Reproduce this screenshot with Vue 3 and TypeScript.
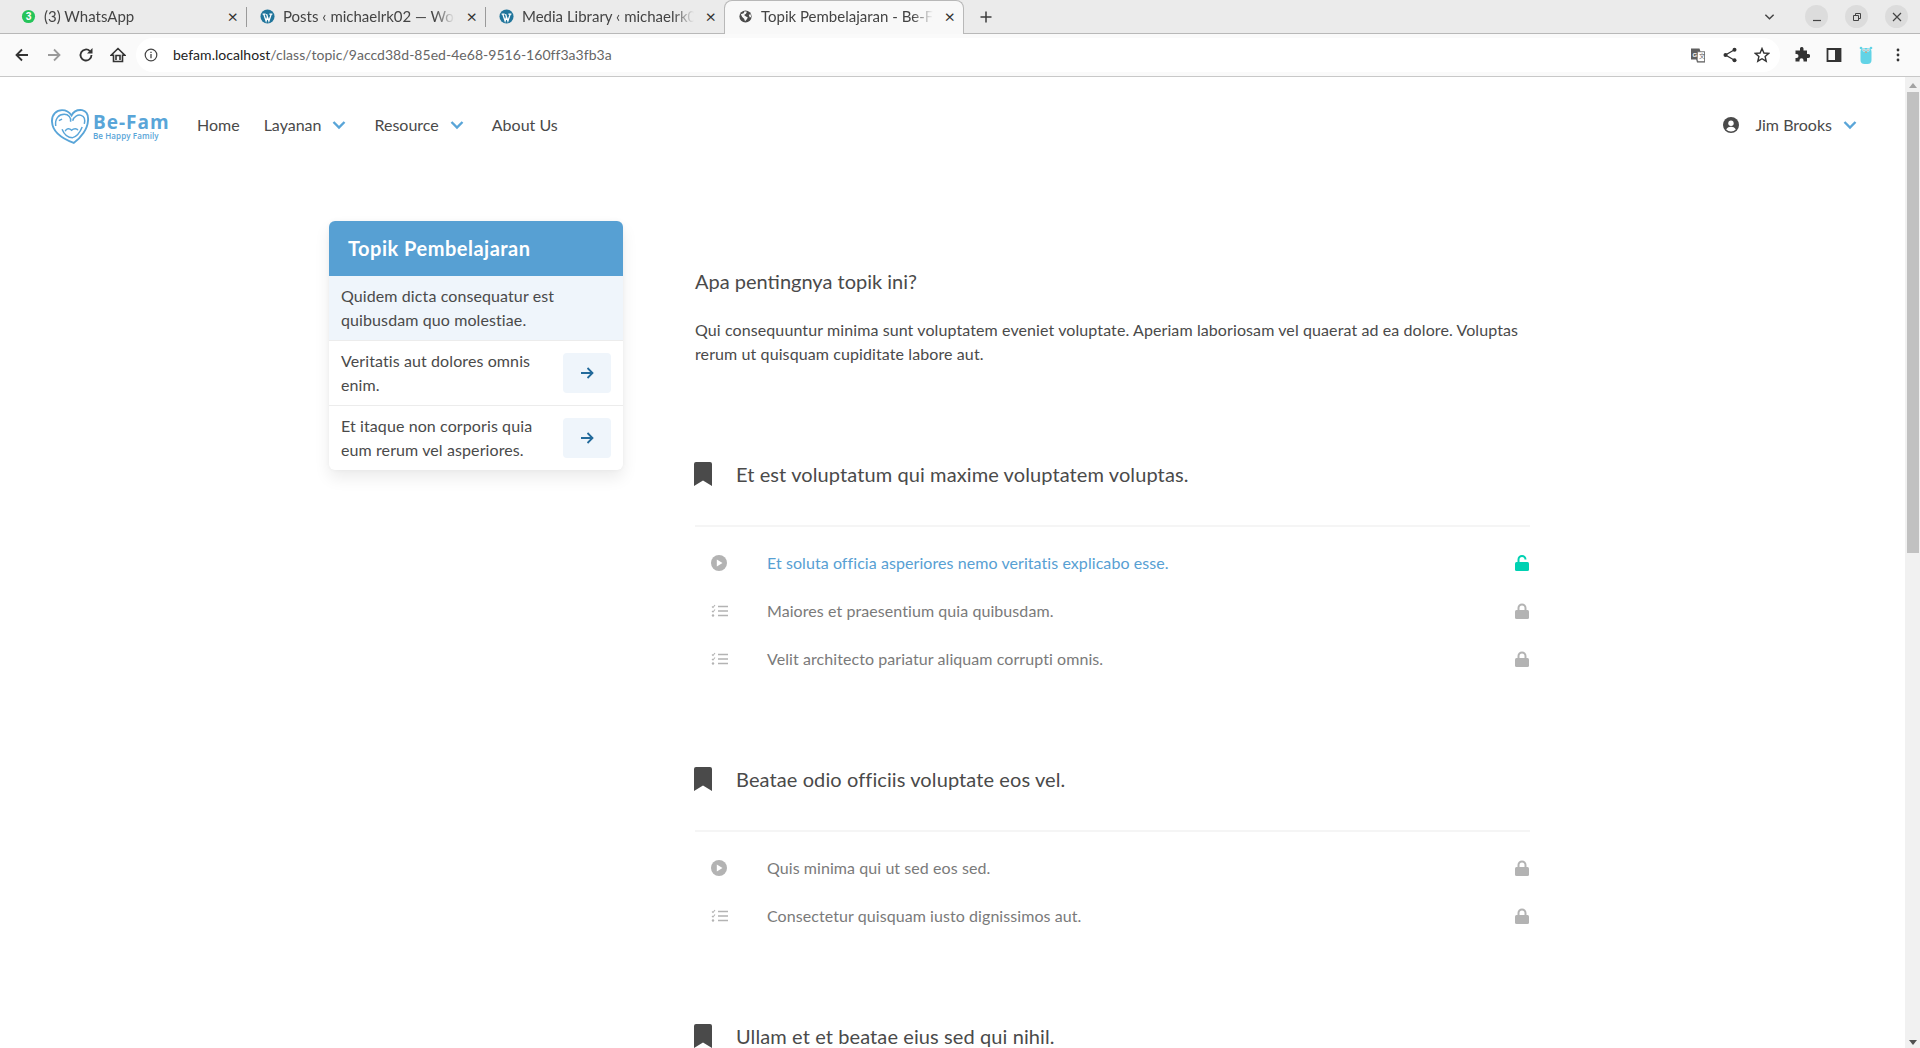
<script setup lang="ts">
interface Item { kind: 'play' | 'list'; text: string; open?: boolean }
interface Section { title: string; items: Item[] }
const tabs = [
  { icon: 'wa', title: '(3) WhatsApp' },
  { icon: 'wp', title: 'Posts ‹ michaelrk02 — WordPress' },
  { icon: 'wp', title: 'Media Library ‹ michaelrk02' },
]
const lessons = [
  { text: 'Quidem dicta consequatur est quibusdam quo molestiae.', active: true },
  { text: 'Veritatis aut dolores omnis enim.', active: false },
  { text: 'Et itaque non corporis quia eum rerum vel asperiores.', active: false },
]
const sections: Section[] = [
  {
    title: 'Et est voluptatum qui maxime voluptatem voluptas.',
    items: [
      { kind: 'play', text: 'Et soluta officia asperiores nemo veritatis explicabo esse.', open: true },
      { kind: 'list', text: 'Maiores et praesentium quia quibusdam.' },
      { kind: 'list', text: 'Velit architecto pariatur aliquam corrupti omnis.' },
    ],
  },
  {
    title: 'Beatae odio officiis voluptate eos vel.',
    items: [
      { kind: 'play', text: 'Quis minima qui ut sed eos sed.' },
      { kind: 'list', text: 'Consectetur quisquam iusto dignissimos aut.' },
    ],
  },
  { title: 'Ullam et et beatae eius sed qui nihil.', items: [] },
]
</script>

<template>
  <div class="window">
    <div class="tabstrip">
      <div v-for="t in tabs" :key="t.title" class="tab">
        <svg v-if="t.icon === 'wa'" class="fav" viewBox="0 0 16 16"><circle cx="8" cy="8" r="7" fill="#25c45a" /><text x="8" y="12" text-anchor="middle" font-size="11" font-weight="700" fill="#fff" font-family="Liberation Sans">3</text></svg>
        <svg v-else class="fav" viewBox="0 0 16 16"><circle cx="8" cy="8" r="7.5" fill="#21759b" /><path d="M2.800 5.500h3.200M10 5.500h3.200M4 5.500 6.500 12.800 8 8.500 9.500 12.800 12 5.500M8 8.500 7 5.500" fill="none" stroke="#fff" stroke-width="1.400" /></svg>
        <span class="tab-title">{{ t.title }}</span>
        <span class="tab-x">×</span>
      </div>
      <div class="tab active">
        <svg class="fav" viewBox="0 0 16 16"><circle cx="8" cy="8" r="6.5" fill="#4a4a4a" /><path d="M3 5.500 6 4.500 7 2.500 9.500 3 8.500 5 6.500 6.500 8.500 8 10.500 9 9 11.500 7.500 13 6.500 10.500 4.500 8.500ZM11.500 6l2-.5.5 3-1.500.5Z" fill="#f8f8f8" /></svg>
        <span class="tab-title">Topik Pembelajaran - Be-Fam</span>
        <span class="tab-x">×</span>
      </div>
      <svg class="plus" viewBox="0 0 12 12"><path d="M6 .5v11M.5 6h11" stroke="#3c3c3c" stroke-width="1.500" /></svg>
      <div class="strip-right">
        <svg class="chev" viewBox="0 0 12 8"><path d="M1.500 1.500 6 6l4.500-4.500" fill="none" stroke="#444" stroke-width="1.600" /></svg>
        <span class="win-btn"><svg viewBox="0 0 12 12"><path d="M2 9.500h8" stroke="#444" stroke-width="1.200" /></svg></span>
        <span class="win-btn"><svg viewBox="0 0 12 12"><path d="M2.500 4.500h5v5h-5zM4.500 4.500V2.500h5v5h-2" fill="none" stroke="#444" stroke-width="1" /></svg></span>
        <span class="win-btn"><svg viewBox="0 0 12 12"><path d="M2 2l8 8M10 2l-8 8" stroke="#444" stroke-width="1.200" /></svg></span>
      </div>
    </div>

    <div class="toolbar">
      <svg class="tool" viewBox="0 0 16 16"><path d="M14 8H3M8 2.500 2.500 8 8 13.500" fill="none" stroke="#333" stroke-width="1.800" /></svg>
      <svg class="tool" viewBox="0 0 16 16"><path d="M2 8h11M8 2.500 13.500 8 8 13.500" fill="none" stroke="#9a9a9a" stroke-width="1.800" /></svg>
      <svg class="tool" viewBox="0 0 16 16"><path d="M13.500 8a5.500 5.500 0 1 1-1.600-3.900" fill="none" stroke="#333" stroke-width="1.800" /><path d="M14.500 1v5.500H9z" fill="#333" /></svg>
      <svg class="tool" viewBox="0 0 16 16"><path d="M8 1.500 1.200 8.200H3.500V14.500h9V8.200h2.300zM6 13V8.500h4V13" fill="none" stroke="#333" stroke-width="1.600" /></svg>
      <div class="omnibox">
        <svg class="info" viewBox="0 0 14 14"><circle cx="7" cy="7" r="5.800" fill="none" stroke="#444" stroke-width="1.200" /><path d="M7 6v4.200M7 3.800v1.200" stroke="#444" stroke-width="1.300" /></svg>
        <span class="url"><b>befam.localhost</b>/class/topic/9accd38d-85ed-4e68-9516-160ff3a3fb3a</span>
        <span class="omni-right">
          <svg class="tool-s" viewBox="0 0 16 16"><path d="M1 1.500h8.500l1 3h4.500v11H7l-.8-3H1z" fill="#5f5f5f" /><path d="M7.500 4.800h7v9.800H7.900l-.6-2.400z" fill="#fff" stroke="#5f5f5f" stroke-width=".6" /><text x="2.500" y="9.800" font-size="6" fill="#fff" font-family="Liberation Sans" font-weight="700">G</text><text x="9" y="11" font-size="6" fill="#5f5f5f" font-family="Noto Sans CJK SC">文</text></svg>
          <svg class="tool-s" viewBox="0 0 16 16"><path d="M12.500 2.800 3.500 8l9 5.200" fill="none" stroke="#333" stroke-width="1.300" /><circle cx="12.500" cy="2.800" r="2" fill="#333" /><circle cx="3.500" cy="8" r="2" fill="#333" /><circle cx="12.500" cy="13.200" r="2" fill="#333" /></svg>
          <svg class="tool-s" viewBox="0 0 16 16"><path d="M8 1.500 9.900 6l4.800.4-3.600 3.100 1.100 4.700L8 11.700l-4.200 2.500 1.100-4.700-3.600-3.100L6.100 6z" fill="none" stroke="#333" stroke-width="1.400" /></svg>
        </span>
      </div>
      <div class="ext">
        <svg class="tool-s" viewBox="0 0 16 16"><path d="M6 1.500a1.800 1.800 0 0 1 3.500 0V3.500H13V7h1.200a2 2 0 0 1 0 4H13v3.500H9.500v-1.200a2 2 0 0 0-4 0v1.200H1.500V11h1a2 2 0 0 0 0-4h-1V3.500H6z" fill="#333" /></svg>
        <svg class="tool-s" viewBox="0 0 16 16"><path d="M1.500 2h13v12h-13z" fill="none" stroke="#333" stroke-width="1.800" /><path d="M9 2h6v12H9z" fill="#333" /></svg>
        <svg class="tool-s gopher" viewBox="0 0 16 20"><rect x="2.500" y="3" width="11" height="16" rx="4" fill="#62d3e6" /><circle cx="3" cy="3" r="1.300" fill="#62d3e6" /><circle cx="13" cy="3" r="1.300" fill="#62d3e6" /><circle cx="6" cy="5" r="1.500" fill="#fff" /><circle cx="10" cy="5" r="1.500" fill="#fff" /><circle cx="6" cy="5" r=".6" fill="#222" /><circle cx="10" cy="5" r=".6" fill="#222" /><rect x="7" y="6.500" width="2" height="1.500" fill="#c9a98c" /></svg>
        <svg class="tool-s" viewBox="0 0 16 16"><circle cx="8" cy="3" r="1.400" fill="#333" /><circle cx="8" cy="8" r="1.400" fill="#333" /><circle cx="8" cy="13" r="1.400" fill="#333" /></svg>
      </div>
    </div>

    <div class="viewport">
      <div class="page">
        <nav class="nav">
          <div class="logo">
            <svg class="logo-mark" viewBox="0 0 37 34"><path d="M22 33C14 30 2 24 1.500 13 1 6 6 2 11 2c4 0 7 2 9 5 2-4 6-5.500 10-5 4 1 6 5 5.500 10C35 20 29 28 22 33Z" fill="none" stroke="#59a5d8" stroke-width="1.800" /><path d="M5 17C4 10 8 6 13 6c4 0 7 3 6 7M8 12l3-1.500M21 12c1-4 5-6 8-5 3 1 4 4 3 8M11 20c2 5 6 8 10 8 4-1 7-5 9-10M14 22c1-3 4-3 6-1 2-2 5-2 6 0" fill="none" stroke="#59a5d8" stroke-width="1.400" /></svg>
            <div class="logo-text"><span class="logo-name">Be-Fam</span><span class="logo-tag">Be Happy Family</span></div>
          </div>
          <a class="nav-link"><span class="nav-label">Home</span></a>
          <a class="nav-link"><span class="nav-label">Layanan</span><svg class="caret" viewBox="0 0 14 10"><path d="M1.500 2 7 7.500 12.500 2" fill="none" stroke="#59a5d8" stroke-width="2.400" /></svg></a>
          <a class="nav-link"><span class="nav-label">Resource</span><svg class="caret" viewBox="0 0 14 10"><path d="M1.500 2 7 7.500 12.500 2" fill="none" stroke="#59a5d8" stroke-width="2.400" /></svg></a>
          <a class="nav-link"><span class="nav-label">About Us</span></a>
          <div class="user">
            <svg class="avatar" viewBox="0 0 16 16"><circle cx="8" cy="8" r="8" fill="#4a4a4a" /><circle cx="8" cy="6.200" r="2.700" fill="#fff" /><path d="M3.200 12.500c1-2 3-2.700 4.800-2.700s3.800.7 4.800 2.700A6.500 6.500 0 0 1 8 14.500a6.500 6.500 0 0 1-4.800-2z" fill="#fff" /></svg>
            <span class="nav-label">Jim Brooks</span>
            <svg class="caret" viewBox="0 0 14 10"><path d="M1.500 2 7 7.500 12.500 2" fill="none" stroke="#59a5d8" stroke-width="2.400" /></svg>
          </div>
        </nav>

        <div class="content">
          <aside class="card">
            <h2 class="card-head">Topik Pembelajaran</h2>
            <div v-for="l in lessons" :key="l.text" class="lesson" :class="{ current: l.active }">
              <span class="lesson-text">{{ l.text }}</span>
              <span v-if="!l.active" class="go"><svg viewBox="0 0 16 16"><path d="M2 8h11.500M8.500 3l5 5-5 5" fill="none" stroke="#236a9b" stroke-width="1.800" /></svg></span>
            </div>
          </aside>

          <main class="main">
            <h3 class="intro-title">Apa pentingnya topik ini?</h3>
            <p class="intro">Qui consequuntur minima sunt voluptatem eveniet voluptate. Aperiam laboriosam vel quaerat ad ea dolore. Voluptas rerum ut quisquam cupiditate labore aut.</p>

            <section v-for="s in sections" :key="s.title" class="section">
              <div class="sec-head">
                <svg class="mark" viewBox="0 0 18 24"><path d="M0 2a2 2 0 0 1 2-2h14a2 2 0 0 1 2 2v22l-9-5.500L0 24z" fill="#4a4a4a" /></svg>
                <span>{{ s.title }}</span>
              </div>
              <template v-if="s.items.length">
                <hr class="rule" />
                <div v-for="i in s.items" :key="i.text" class="row" :class="{ open: i.open }">
                  <span class="row-icon">
                    <svg v-if="i.kind === 'play'" class="ic-play" viewBox="0 0 16 16"><circle cx="8" cy="8" r="8" fill="#b3b3b3" /><path d="M5.800 4.500v7l5.700-3.500z" fill="#fff" /></svg>
                    <svg v-else class="ic-list" viewBox="0 0 18 14"><path d="M7 2.500h10M7 7h10M7 11.500h10" stroke="#b3b3b3" stroke-width="1.500" /><path d="M1 2.500l1 1 2-2.500M1 7l1 1 2-2.500" fill="none" stroke="#b3b3b3" stroke-width="1.100" /><circle cx="2" cy="11.500" r="1.200" fill="#b3b3b3" /></svg>
                  </span>
                  <span class="row-text">{{ i.text }}</span>
                  <svg class="lock" viewBox="0 0 14 16">
                    <path v-if="i.open" d="M3.500 7V4.500a3.500 3.500 0 0 1 7 0" fill="none" stroke="currentColor" stroke-width="2" />
                    <path v-else d="M3.500 8V5a3.500 3.500 0 0 1 7 0v3" fill="none" stroke="currentColor" stroke-width="2" />
                    <rect y="7" width="14" height="9" rx="1.500" fill="currentColor" />
                  </svg>
                </div>
              </template>
            </section>
          </main>
        </div>
      </div>
      <div class="scrollbar">
        <svg class="arrow" viewBox="0 0 10 6"><path d="M5 0l5 6H0z" fill="#a3a3a3" /></svg>
        <div class="thumb"></div>
        <span class="spacer"></span>
        <svg class="arrow" viewBox="0 0 10 6"><path d="M5 6 0 0h10z" fill="#505050" /></svg>
      </div>
    </div>
  </div>
</template>

<style>
html, body { margin: 0; overflow: hidden; background: #fff; }
</style>

<style scoped>
.window { width: 1920px; height: 1048px; display: flex; flex-direction: column; overflow: hidden; font-family: Lato, "Noto Sans", sans-serif; color: #4a4a4a; }
.tabstrip { height: 34px; flex: none; background: #ebebeb; border-bottom: 1px solid #b8b8b8; box-sizing: border-box; display: flex; align-items: flex-start; padding-left: 8px; font-size: 15px; }
.tab { width: 239px; box-sizing: border-box; display: flex; align-items: center; padding: 0 8px 2px 13px; border-right: 1px solid #9a9a9a; margin-top: 7px; height: 20px; color: #444; }
.tab.active { background: #f8f8f8; width: 240px; border: 1px solid #b8b8b8; border-bottom: none; border-radius: 8px 8px 0 0; margin: 0 0 -1px -1px; height: 34px; padding-bottom: 3px; }
.fav { width: 15px; height: 15px; flex: none; margin-right: 8px; }
.tab-title { flex: 1; min-width: 0; white-space: nowrap; overflow: hidden; -webkit-mask-image: linear-gradient(to right, #000 88%, transparent); mask-image: linear-gradient(to right, #000 88%, transparent); }
.tab-x { font-size: 18px; line-height: 18px; margin-left: 12px; color: #333; }
.plus { width: 12px; height: 12px; margin: 11px 0 0 16px; flex: none; }
.strip-right { margin-left: auto; display: flex; align-items: center; height: 33px; padding-right: 12px; gap: 17px; }
.chev { width: 11px; height: 8px; margin-right: 13px; }
.win-btn { width: 23px; height: 23px; border-radius: 50%; background: #dcdcdc; display: flex; align-items: center; justify-content: center; }
.win-btn svg { width: 12px; height: 12px; }

.toolbar { height: 43px; background: #fafafa; border-bottom: 1px solid #c8c8c8; box-sizing: border-box; display: flex; align-items: center; padding-left: 14px; flex: none; }
.tool { width: 16px; height: 16px; margin-right: 16px; flex: none; }
.omnibox { width: 1644px; height: 34px; background: #fff; border-radius: 17px; display: flex; align-items: center; padding: 0 0 0 8px; box-sizing: border-box; font-size: 14px; color: #666; margin-left: -6px; }
.info { width: 14px; height: 14px; margin-right: 15px; }
.url { letter-spacing: .03px; padding-bottom: 1px; }
.url b { font-weight: 400; color: #222; }
.omni-right { margin-left: auto; display: flex; gap: 16px; padding-right: 10px; }
.tool-s { width: 16px; height: 16px; flex: none; }
.ext { display: flex; align-items: center; gap: 16px; margin-left: 14px; }
.gopher { height: 20px; }

.viewport { flex: 1; display: flex; min-height: 0; }
.page { flex: 1; overflow: hidden; min-width: 0; letter-spacing: .1px; }
.scrollbar { width: 15px; background: #f1f1f1; display: flex; flex-direction: column; align-items: center; padding: 6px 0 3px; box-sizing: border-box; }
.arrow { width: 8px; height: 5px; flex: none; }
.thumb { width: 12px; height: 461px; background: #c1c1c1; margin-top: 4px; }
.spacer { flex: 1; }

.nav { height: 96px; display: flex; align-items: center; padding: 0 48px 0 50px; font-size: 16px; box-sizing: border-box; letter-spacing: 0; }
.logo { display: flex; align-items: center; gap: 3px; width: 147px; color: #59a5d8; margin-top: 2px; }
.logo-mark { width: 40px; height: 36px; flex: none; }
.logo-text { display: flex; flex-direction: column; gap: 1px; }
.logo-name { font-size: 19px; line-height: 18px; font-weight: 700; letter-spacing: 1px; font-family: "Open Sans", sans-serif; }
.logo-tag { font-size: 8px; line-height: 8px; font-weight: 600; letter-spacing: .1px; font-family: "Open Sans", sans-serif; }
.nav-link { display: flex; align-items: center; margin-right: 24px; }
.nav-label { padding-bottom: 2px; }
.caret { width: 14px; height: 10px; margin-left: 11px; margin-right: 4px; }
.user { margin-left: auto; display: flex; align-items: center; }
.user .caret { margin-right: 0; margin-left: 11px; }
.avatar { width: 16px; height: 16px; margin-right: 16px; }

.content { display: flex; align-items: flex-start; padding: 48px 0 0 329px; gap: 72px; }
.card { width: 294px; flex: none; background: #fff; border-radius: 6px; overflow: hidden; box-shadow: 0 8px 16px rgba(0,0,0,.08), 0 0 4px rgba(0,0,0,.04); }
.card-head { margin: 0; height: 55px; background: #57a0d3; color: #fff; font-size: 20px; font-weight: 700; line-height: 55px; padding-left: 19px; letter-spacing: .5px; }
.lesson { display: flex; align-items: center; gap: 12px; padding: 0 12px; height: 65px; box-sizing: border-box; border-bottom: 1px solid #ececec; font-size: 16px; line-height: 24px; color: #4a4a4a; }
.lesson:last-child { border-bottom: 0; height: 64px; }
.lesson.current { background: #eff5fb; }
.lesson-text { flex: 1; }
.go { width: 48px; height: 40px; border-radius: 4px; background: #eff5fb; display: flex; align-items: center; justify-content: center; flex: none; }
.go svg { width: 16px; height: 16px; }

.main { width: 835px; flex: none; }
.intro-title { margin: 0; padding-top: 47px; font-size: 20px; font-weight: 400; line-height: 27px; color: #4a4a4a; letter-spacing: 0; }
.intro { margin: 23px 0 0; font-size: 16px; line-height: 24px; }
.section { padding-bottom: 41px; }
.sec-head { display: flex; align-items: center; gap: 24px; font-size: 20px; height: 30px; margin-top: 93px; color: #4a4a4a; }
.section + .section .sec-head { margin-top: 40px; }
.mark { width: 18px; height: 24px; flex: none; margin-left: -1px; }
.rule { border: 0; border-top: 2px solid #f5f5f5; margin: 36px 0 12px; }
.row { height: 48px; display: flex; align-items: center; font-size: 16px; color: #7a7a7a; letter-spacing: .07px; }
.row.open { color: #57a0d3; }
.row-icon { width: 72px; padding-left: 16px; box-sizing: border-box; display: flex; flex: none; }
.ic-play { width: 16px; height: 16px; }
.ic-list { width: 18px; height: 14px; }
.row-text { flex: 1; padding-bottom: 2px; }
.lock { width: 14px; height: 16px; color: #b3b3b3; flex: none; margin-right: 1px; }
.row.open .lock { color: #00d1b2; }
</style>
